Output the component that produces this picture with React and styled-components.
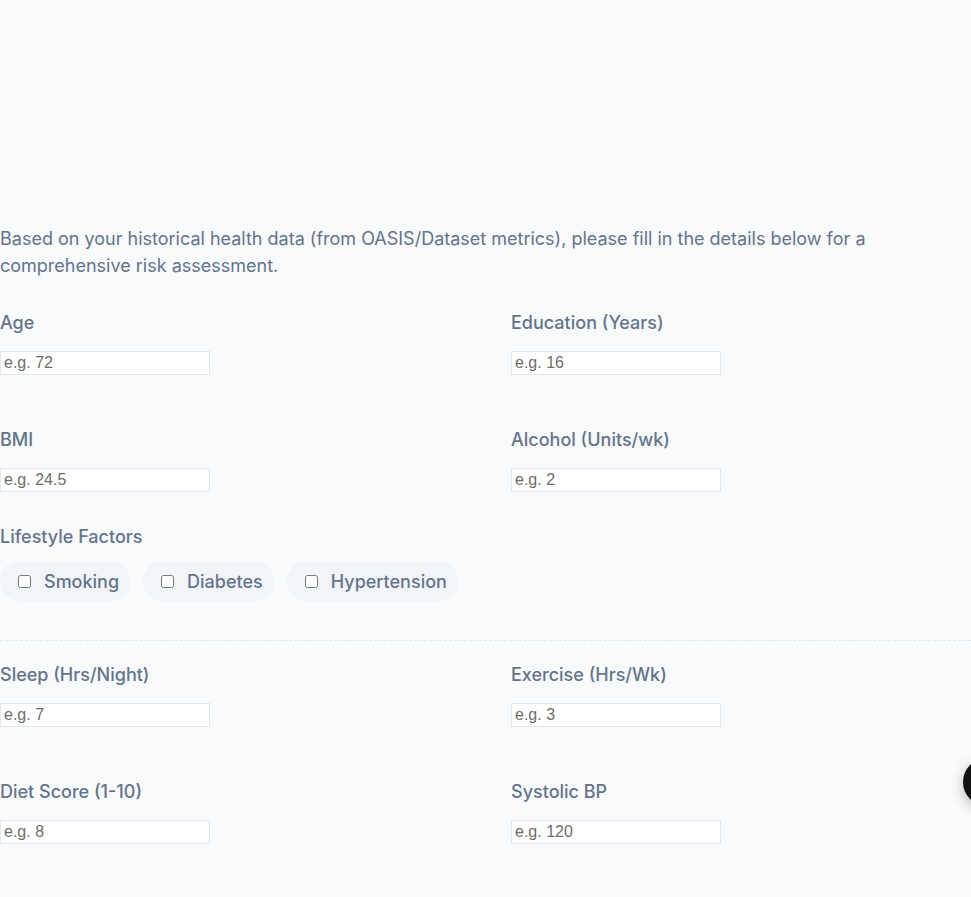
import React from "react";
import styled, { createGlobalStyle } from "styled-components";

const Global = createGlobalStyle`
  html, body { margin: 0; padding: 0; background: #f8fafc; }
  body { font-family: Inter, "Noto Sans", sans-serif; color: #64748b; overflow: hidden; }
`;

const Page = styled.div`
  padding-top: 225px;
  min-height: 897px;
  box-sizing: border-box;
`;

const Intro = styled.p`
  margin: 0 0 32px;
  font-size: 18px;
  line-height: 27px;
  color: #64748b;
  max-width: 900px;
`;

const Grid = styled.div`
  display: grid;
  grid-template-columns: 460px 1fr;
  column-gap: 51px;
  row-gap: 53px;
`;

const Field = styled.div`
  display: flex;
  flex-direction: column;
  align-items: flex-start;
`;

const Label = styled.label`
  font-size: 18px;
  line-height: 24px;
  font-weight: 500;
  color: #64748b;
  margin-bottom: ${(p) => p.$mb ?? 16}px;
`;

const Input = styled.input`
  box-sizing: border-box;
  width: 210px;
  height: 24px;
  margin: 0;
  padding: 1px 3px;
  border: 1px solid #e2e8f0;
  background: #fff;
  font-family: "Liberation Sans", Arial, sans-serif;
  font-size: 16px;
  color: #333;
  outline: none;
  &::placeholder { color: #706c6a; }
`;

const Lifestyle = styled.div`
  margin-top: 33px;
  display: flex;
  flex-direction: column;
  align-items: flex-start;
`;

const Chips = styled.div`
  display: flex;
  gap: 13px;
`;

const Chip = styled.label`
  display: flex;
  align-items: center;
  height: 40px;
  box-sizing: border-box;
  padding: 0 11px 0 14px;
  border-radius: 20px;
  background: #f1f5f9;
  font-size: 18px;
  font-weight: 500;
  color: #64748b;
  gap: 10px;
  cursor: pointer;
  input { margin: 3px 3px 3px 4px; width: 13px; height: 13px; }
`;

const Divider = styled.hr`
  margin: 39px 0 22px;
  border: 0;
  border-top: 1px dashed #e2e8f0;
  height: 0;
`;

const Fab = styled.button`
  position: fixed;
  left: 963px;
  top: 758px;
  width: 48px;
  height: 48px;
  border-radius: 50%;
  border: 0;
  background: #111111;
  box-shadow: 0 4px 14px rgba(0, 0, 0, 0.25);
`;

const fieldsA = [
  ["Age", "e.g. 72"],
  ["Education (Years)", "e.g. 16"],
  ["BMI", "e.g. 24.5"],
  ["Alcohol (Units/wk)", "e.g. 2"],
];
const fieldsB = [
  ["Sleep (Hrs/Night)", "e.g. 7"],
  ["Exercise (Hrs/Wk)", "e.g. 3"],
  ["Diet Score (1-10)", "e.g. 8"],
  ["Systolic BP", "e.g. 120"],
];

const FieldGrid = ({ items }) => (
  <Grid>
    {items.map(([l, p]) => (
      <Field key={l}>
        <Label>{l}</Label>
        <Input type="number" placeholder={p} />
      </Field>
    ))}
  </Grid>
);

export default function App() {
  return (
    <>
      <Global />
      <Page>
        <Intro>
          Based on your historical health data (from OASIS/Dataset metrics), please fill in the details below for a
          comprehensive risk assessment.
        </Intro>
        <FieldGrid items={fieldsA} />
        <Lifestyle>
          <Label $mb={12}>Lifestyle Factors</Label>
          <Chips>
            {["Smoking", "Diabetes", "Hypertension"].map((c) => (
              <Chip key={c}>
                <input type="checkbox" />
                {c}
              </Chip>
            ))}
          </Chips>
        </Lifestyle>
        <Divider />
        <FieldGrid items={fieldsB} />
      </Page>
      <Fab aria-label="chat" />
    </>
  );
}
